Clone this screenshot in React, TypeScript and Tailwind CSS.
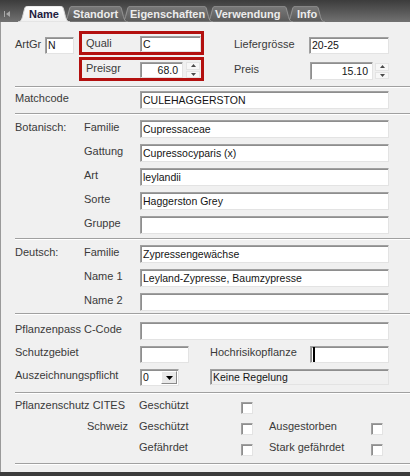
import React from 'react';

// classic sunken 3D edge used by text boxes, combo and check boxes
const sunken =
  'border border-t-[#a0a0a0] border-l-[#a0a0a0] border-r-[#e3e3e3] border-b-[#e3e3e3] shadow-[inset_1px_1px_0_#8e8e8e]';

type FieldProps = {
  value?: string;
  className?: string;
  right?: boolean;
  caret?: boolean;
  readOnly?: boolean;
};

const Field = ({ value = '', className = '', right = false, caret = false, readOnly = false }: FieldProps) => (
  <div
    className={`${sunken} ${readOnly ? 'bg-[#f0f0f0]' : 'bg-white'} ${
      right ? 'justify-end pr-[4px]' : 'pl-[2px]'
    } flex items-center shrink-0 text-[10.5px] text-[#141414] ${className}`}
  >
    {caret && <span className="w-[2px] h-full bg-black" />}
    <span className="leading-none whitespace-nowrap">{value}</span>
  </div>
);

const Label = ({ children, className = '' }: { children?: React.ReactNode; className?: string }) => (
  <span className={`shrink-0 text-[11px] leading-[13px] text-[#3a3a3a] whitespace-nowrap ${className}`}>{children}</span>
);

const Rule = ({ className = '' }: { className?: string }) => (
  <div className={`ml-[14px] ${className}`}>
    <div className="h-px bg-[#a0a0a0]" />
    <div className="h-px bg-white" />
  </div>
);

const Arrow = ({ up }: { up?: boolean }) => (
  <svg width="5" height="3" viewBox="0 0 5 3">
    <path d={up ? 'M2.5 0L5 3H0z' : 'M0 0h5L2.5 3z'} fill="#4a4a4a" />
  </svg>
);

const Spin = ({ className = '' }: { className?: string }) => (
  <div className={`flex flex-col w-[14px] h-[16px] gap-px shrink-0 ${className}`}>
    <div className="flex-1 bg-[#f7f7f7] border border-[#e4e4e4] flex items-center justify-center">
      <Arrow up />
    </div>
    <div className="flex-1 bg-[#f7f7f7] border border-[#e4e4e4] flex items-center justify-center">
      <Arrow />
    </div>
  </div>
);

const Check = () => <div className={`${sunken} bg-white w-[12px] h-[12px] mt-[4px] shrink-0`} />;

const Row = ({ a, b, children, className = '' }: { a?: string; b?: string; children?: React.ReactNode; className?: string }) => (
  <div className={`flex items-start pl-[14px] ${className}`}>
    <Label className="w-[69px] pt-px">{a}</Label>
    <Label className="w-[56px] pt-px">{b}</Label>
    {children}
  </div>
);

const tabs = [
  { label: 'Name', w: 45, cls: 'w-[45px] pl-[4px] z-[6]', active: true },
  { label: 'Standort', w: 58, cls: 'w-[58px] pl-[3px] z-[5]', active: false },
  { label: 'Eigenschaften', w: 85, cls: 'w-[85px] pl-[2px] z-[4]', active: false },
  { label: 'Verwendung', w: 80, cls: 'w-[80px] pl-[2px] z-[3]', active: false },
  { label: 'Info', w: 32, cls: 'w-[32px] pl-[4px] z-[2]', active: false },
];

const tabPath = (W: number) =>
  `M0 16C3 16 4 13 5 9L6.5 3C7 1 8 0 10 0L${W - 10} 0C${W - 8} 0 ${W - 7} 1 ${W - 6.5} 3L${W - 5} 9C${W - 4} 13 ${W - 3} 16 ${W} 16Z`;

const TabStrip = () => (
  <div className="h-[22px] flex items-end bg-linear-to-b from-[#3c3c3c] to-[#727272] shrink-0">
    <svg width="6" height="6" viewBox="0 0 6 6" className="ml-[4px] mb-[5px]">
      <rect x="0" y="0" width="1" height="6" fill="#a8a8a8" />
      <path d="M6 0v6L2 3z" fill="#a8a8a8" />
    </svg>
    <div className="flex items-end ml-[15px]">
      {tabs.map((t) => (
        <div key={t.label} className={`relative h-[16px] flex items-center ${t.cls}`}>
          <svg width={t.w + 7} height="16" className="absolute -left-[7px] top-0">
            <defs>
              <linearGradient id="tabOff" x1="0" y1="0" x2="0" y2="1">
                <stop offset="0" stopColor="#7a7a7a" />
                <stop offset="1" stopColor="#595959" />
              </linearGradient>
              <linearGradient id="tabOn" x1="0" y1="0" x2="0" y2="1">
                <stop offset="0" stopColor="#ffffff" />
                <stop offset="1" stopColor="#f0f0f0" />
              </linearGradient>
            </defs>
            <path
              d={tabPath(t.w + 7)}
              fill={t.active ? 'url(#tabOn)' : 'url(#tabOff)'}
              stroke={t.active ? '#d8d8d8' : '#939393'}
              strokeWidth="1"
            />
          </svg>
          <span
            className={`relative text-[11px] font-bold leading-none whitespace-nowrap ${
              t.active ? 'text-[#1e2040]' : 'text-[#ececec]'
            }`}
          >
            {t.label}
          </span>
        </div>
      ))}
    </div>
  </div>
);

export default function App() {
  return (
    <div className="w-[410px] h-[476px] flex flex-col bg-[#f0f0f0] overflow-hidden font-['Liberation_Sans',Arial,sans-serif]">
      <TabStrip />
      <div className="flex-1 flex flex-col border-l border-[#9a9a9a]">
        {/* Artikelgruppe, Qualität, Preis */}
        <div className="flex items-start pt-[9px] pl-[14px]">
          <div className="flex items-start pt-[6px]">
            <Label className="w-[30px] pt-px">ArtGr</Label>
            <Field value="N" className="w-[29px] h-[17px]" />
          </div>
          <div className="ml-[5px] flex flex-col gap-[2px]">
            <div className="w-[125px] h-[24px] border-[3px] border-[#b3100f] flex items-start pl-[4px] pt-[2px]">
              <Label className="w-[54px] pt-px">Quali</Label>
              <Field value="C" className="w-[61px] h-[16px]" />
            </div>
            <div className="w-[125px] h-[24px] border-[3px] border-[#b3100f] flex items-start pl-[4px] pt-[2px]">
              <Label className="w-[54px]">Preisgr</Label>
              <Field right value="68.0" className="w-[43px] h-[16px]" />
              <Spin className="ml-[3px]" />
            </div>
          </div>
          <div className="ml-[30px] flex flex-col">
            <div className="flex items-start mt-[6px]">
              <Label className="w-[75px] pt-px">Liefergrösse</Label>
              <Field value="20-25" className="w-[80px] h-[17px]" />
            </div>
            <div className="flex items-start mt-[8px]">
              <Label className="w-[76px] pt-px">Preis</Label>
              <Field right value="15.10" className="w-[63px] h-[18px]" />
              <Spin className="ml-[2px] mt-px" />
            </div>
          </div>
        </div>

        <Rule className="mt-[5px]" />
        <Row a="Matchcode" className="mt-[3px]">
          <Field value="CULEHAGGERSTON" className="w-[249px] h-[18px]" />
        </Row>

        <Rule className="mt-[4px]" />
        <Row a="Botanisch:" b="Familie" className="mt-[5px]">
          <Field value="Cupressaceae" className="w-[249px] h-[18px]" />
        </Row>
        <Row b="Gattung" className="mt-[6px]">
          <Field value="Cupressocyparis (x)" className="w-[249px] h-[18px]" />
        </Row>
        <Row b="Art" className="mt-[6px]">
          <Field value="leylandii" className="w-[249px] h-[18px]" />
        </Row>
        <Row b="Sorte" className="mt-[6px]">
          <Field value="Haggerston Grey" className="w-[249px] h-[18px]" />
        </Row>
        <Row b="Gruppe" className="mt-[6px]">
          <Field className="w-[249px] h-[18px]" />
        </Row>

        <Rule className="mt-[4px]" />
        <Row a="Deutsch:" b="Familie" className="mt-[5px]">
          <Field value="Zypressengewächse" className="w-[249px] h-[18px]" />
        </Row>
        <Row b="Name 1" className="mt-[6px]">
          <Field value="Leyland-Zypresse, Baumzypresse" className="w-[249px] h-[18px]" />
        </Row>
        <Row b="Name 2" className="mt-[6px]">
          <Field className="w-[249px] h-[18px]" />
        </Row>

        <Rule className="mt-[2px]" />
        <Row a="Pflanzenpass" b="C-Code" className="mt-[7px]">
          <Field className="w-[249px] h-[18px]" />
        </Row>
        <div className="flex items-start pl-[14px] mt-[6px]">
          <Label className="w-[125px]">Schutzgebiet</Label>
          <Field className="w-[49px] h-[17px]" />
          <Label className="ml-[21px] w-[100px]">Hochrisikopflanze</Label>
          <Field caret className="w-[79px] h-[17px]" />
        </div>
        <div className="flex items-start pl-[14px] mt-[6px]">
          <Label className="w-[125px]">Auszeichnungspflicht</Label>
          <div className={`${sunken} bg-white w-[39px] h-[17px] flex items-center pl-[2px] pr-[1px] shrink-0`}>
            <span className="flex-1 text-[10.5px] leading-none text-[#141414]">0</span>
            <div className="w-[16px] h-[13px] bg-[#e9e9e9] border border-t-white border-l-white border-r-[#8a8a8a] border-b-[#8a8a8a] flex items-center justify-center">
              <svg width="7" height="4" viewBox="0 0 7 4">
                <path d="M0 0h7L3.5 4z" fill="#000" />
              </svg>
            </div>
          </div>
          <Field readOnly value="Keine Regelung" className="ml-[31px] w-[179px] h-[16px]" />
        </div>

        <Rule className="mt-[6px]" />
        {/* Schutzstatus */}
        <div className="flex items-center h-[21px] pl-[14px] mt-px">
          <Label className="w-[124px]">Pflanzenschutz CITES</Label>
          <Label className="w-[102px]">Geschützt</Label>
          <Check />
        </div>
        <div className="flex items-center h-[21px] pl-[14px]">
          <Label className="w-[124px] text-right pr-[11px]">Schweiz</Label>
          <Label className="w-[102px]">Geschützt</Label>
          <Check />
          <Label className="ml-[16px] w-[102px]">Ausgestorben</Label>
          <Check />
        </div>
        <div className="flex items-center h-[21px] pl-[14px]">
          <Label className="w-[124px]" />
          <Label className="w-[102px]">Gefährdet</Label>
          <Check />
          <Label className="ml-[16px] w-[102px]">Stark gefährdet</Label>
          <Check />
        </div>
        <Rule className="mt-[5px]" />
      </div>
      <div className="h-[4px] bg-[#3c3c3c] shrink-0" />
    </div>
  );
}
